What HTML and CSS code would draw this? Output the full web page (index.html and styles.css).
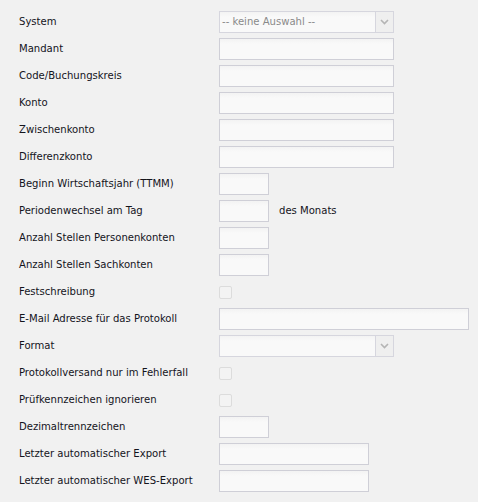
FILE: index.html
```html
<!DOCTYPE html>
<html lang="de">
<head>
<meta charset="utf-8">
<link rel="stylesheet" href="styles.css">
</head>
<body>
<div class="form">
  <div class="row"><span class="label">System</span><div class="select"><span class="sel-text placeholder">-- keine Auswahl --</span><span class="sel-arrow"><svg width="9" height="6" viewBox="0 0 9 6"><path d="M1 1 L4.5 4.5 L8 1" fill="none" stroke="#b4b4b4" stroke-width="1.6"/></svg></span></div></div>
  <div class="row"><span class="label">Mandant</span><div class="field w175"></div></div>
  <div class="row"><span class="label">Code/Buchungskreis</span><div class="field w175"></div></div>
  <div class="row"><span class="label">Konto</span><div class="field w175"></div></div>
  <div class="row"><span class="label">Zwischenkonto</span><div class="field w175"></div></div>
  <div class="row"><span class="label">Differenzkonto</span><div class="field w175"></div></div>
  <div class="row"><span class="label">Beginn Wirtschaftsjahr (TTMM)</span><div class="field w50"></div></div>
  <div class="row"><span class="label">Periodenwechsel am Tag</span><div class="field w50"></div><span class="suffix">des Monats</span></div>
  <div class="row"><span class="label">Anzahl Stellen Personenkonten</span><div class="field w50"></div></div>
  <div class="row"><span class="label">Anzahl Stellen Sachkonten</span><div class="field w50"></div></div>
  <div class="row"><span class="label">Festschreibung</span><div class="check"></div></div>
  <div class="row"><span class="label">E-Mail Adresse für das Protokoll</span><div class="field w250"></div></div>
  <div class="row"><span class="label">Format</span><div class="select"><span class="sel-text"></span><span class="sel-arrow"><svg width="9" height="6" viewBox="0 0 9 6"><path d="M1 1 L4.5 4.5 L8 1" fill="none" stroke="#b4b4b4" stroke-width="1.6"/></svg></span></div></div>
  <div class="row"><span class="label">Protokollversand nur im Fehlerfall</span><div class="check"></div></div>
  <div class="row"><span class="label">Prüfkennzeichen ignorieren</span><div class="check"></div></div>
  <div class="row"><span class="label">Dezimaltrennzeichen</span><div class="field w50"></div></div>
  <div class="row"><span class="label">Letzter automatischer Export</span><div class="field w150"></div></div>
  <div class="row"><span class="label">Letzter automatischer WES-Export</span><div class="field w150"></div></div>
</div>
</body>
</html>
```
FILE: styles.css
```css
html, body {
  margin: 0;
  padding: 0;
  background: #f1f1f1;
}
body {
  font-family: "DejaVu Sans Condensed", "DejaVu Sans", sans-serif;
  font-size: 11.2px;
  color: #14141c;
}
.form {
  display: flex;
  flex-direction: column;
  gap: 5px;
  padding: 11px 0 0 19px;
}
.row {
  display: flex;
  align-items: center;
  height: 22px;
}
.label {
  width: 200px;
  flex: none;
  padding-bottom: 2px;
}
.field {
  height: 22px;
  box-sizing: border-box;
  border: 1px solid #cfcfd7;
  background: linear-gradient(#f3f3f3, #f9f9f9 5px);
}
.w175 { width: 175px; }
.w50 { width: 50px; }
.w250 { width: 250px; }
.w150 { width: 150px; }
.suffix {
  margin-left: 10px;
  padding-bottom: 2px;
}
.select {
  width: 175px;
  height: 22px;
  box-sizing: border-box;
  display: flex;
  border: 1px solid #d6d6de;
}
.sel-text {
  flex: 1;
  border-right: 1px solid #d6d6de;
  background: linear-gradient(#f3f3f3, #f9f9f9 5px);
  color: #8a8a8a;
  padding-left: 2px;
  line-height: 20px;
}
.sel-arrow {
  width: 17px;
  background: #efefef;
  display: flex;
  align-items: center;
  justify-content: center;
}
.check {
  width: 13px;
  height: 13px;
  box-sizing: border-box;
  border: 1px solid #dcdcdc;
  border-radius: 2px;
  background: #f3f3f3;
}
```
